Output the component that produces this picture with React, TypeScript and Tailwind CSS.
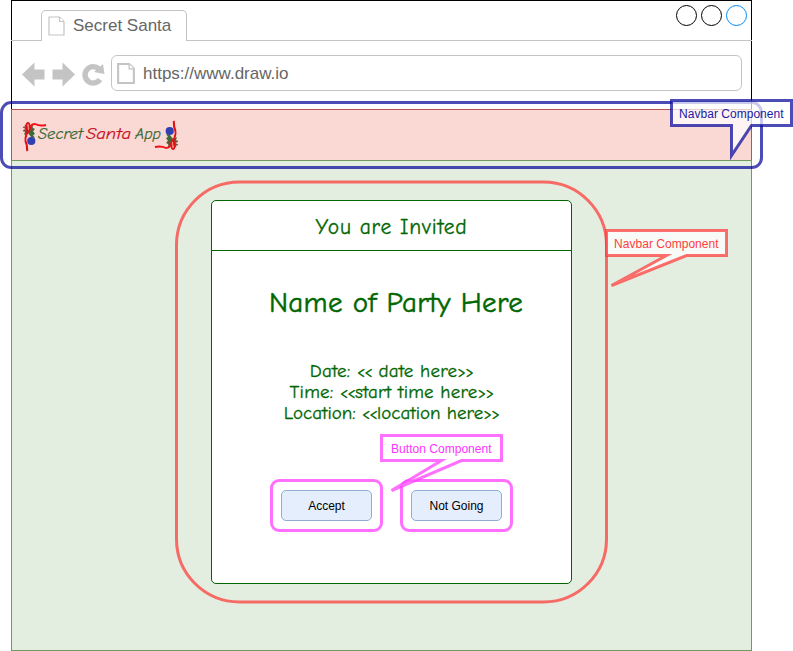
import React from "react";

function PageIcon({ className, bold = false }: { className: string; bold?: boolean }) {
  return (
    <svg className={className} viewBox="0 0 17 20" fill="white" stroke="#c4c4c4" strokeWidth={bold ? 2 : 1.2}>
      <path d="M1 1H11.5L16 5.5V19H1Z" />
      <path d="M11.5 1V5.5H16" strokeWidth="1.2" />
    </svg>
  );
}

function Sprig({ transform }: { transform?: string }) {
  return (
    <g transform={transform}>
      <path d="M6 8L9 4L10 7L12 8L10 10L12 13L10 14L12 17L8 16L5 12L1 14L2 11L0 9L3 8L1 5L5 6Z" fill="#3a6b38" />
      <path d="M0 6L4 8M0 10L5 9M2 4L5 7M8 6L10 4M8 9L11 9M2 13L5 11" stroke="#9a3a32" strokeWidth="1.2" fill="none" />
      <path d="M5 11C2.5 7 3.5 2 5 2C7 2 6.5 8 5 11C2 15 2 20 3.5 23C4.5 26 3.5 28 4.5 30" stroke="#df1114" strokeWidth="2.1" fill="none" />
      <path d="M6 11C7 5 8 3 12 3C16 5 19 5 23 4" stroke="#f01015" strokeWidth="1.9" fill="none" />
      <path d="M5 3L5.5 9M5 13L4 19" stroke="#f4b9b3" strokeWidth="0.8" />
      <circle cx="8.3" cy="20" r="4.1" fill="#3040b3" />
    </g>
  );
}

function Logo() {
  return (
    <svg
      className="ml-[10px] mt-[10px] h-8 w-[158px] font-['Comic_Sans_MS','Comic_Neue',Lato,cursive] text-[15.5px] italic"
      viewBox="22 120 158 32"
    >
      <Sprig transform="translate(23 121)" />
      <Sprig transform="translate(178 151) rotate(180)" />
      <g strokeWidth="0.2">
        <text x="38" y="138.5" fill="#376633" stroke="#376633" textLength="45" lengthAdjust="spacingAndGlyphs">Secret</text>
        <text x="86" y="138.5" fill="#c80d1c" stroke="#c80d1c" textLength="45" lengthAdjust="spacingAndGlyphs">Santa</text>
        <text x="135" y="138.5" fill="#376633" stroke="#376633" textLength="26" lengthAdjust="spacingAndGlyphs">App</text>
      </g>
    </svg>
  );
}

function BrowserChrome() {
  return (
    <header className="h-[109px] border-x border-t border-black bg-white font-['Liberation_Sans',sans-serif] text-[#666666]">
      <div className="-mx-px flex h-10 items-start border-b border-[#c4c4c4]">
        <div className="-mb-px ml-[30px] mt-[9px] flex h-[31px] w-[146px] items-center rounded-t-[5px] border border-b-0 border-[#c4c4c4] bg-white pl-[6px]">
          <PageIcon className="h-[20px] w-[17px]" />
          <span className="ml-[8px] text-[17px] leading-[20px]">Secret Santa</span>
        </div>
        <svg className="ml-auto mr-[4px] mt-[3px] h-[23px] w-[73px]" viewBox="675 4 73 23" fill="white">
          <circle cx="686.5" cy="15.5" r="10" stroke="#000" />
          <circle cx="711.5" cy="15.5" r="10" stroke="#000" />
          <circle cx="736.5" cy="15.5" r="10" stroke="#008cff" />
        </svg>
      </div>
      <div className="flex pt-[14px]">
        <svg className="ml-[10px] mt-[6px] h-[26px] w-[84px]" viewBox="22 61 84 26" fill="#c4c4c4">
          <path d="M22 74.5L34.5 62.5V69.5H44.5V79.5H34.5V86.5Z" />
          <path d="M75 74.5L62.5 62.5V69.5H52.5V79.5H62.5V86.5Z" />
          <path d="M100 79.5A8.2 8.2 0 1 1 99 69" fill="none" stroke="#c4c4c4" strokeWidth="5.4" />
          <path d="M103 64L104.5 74L94 72Z" />
        </svg>
        <div className="ml-[5px] flex h-[36px] w-[631px] items-center rounded-[6px] border border-[#c4c4c4] pl-[5px]">
          <PageIcon bold className="h-[21px] w-[18px]" />
          <span className="ml-[8px] pt-[2px] text-[17px] leading-[20px]">https://www.draw.io</span>
        </div>
      </div>
    </header>
  );
}

function CardButton({ children }: { children: React.ReactNode }) {
  return (
    <button className="h-[31px] w-[91px] rounded-[5px] border border-[#91add3] bg-[#e5eefd] pt-px font-['Liberation_Sans',sans-serif] text-[12px] text-black">
      {children}
    </button>
  );
}

function Angles({ children }: { children: string }) {
  return <span className="text-[16px] leading-none tracking-[-0.7px]">{children}</span>;
}

function InvitationCard() {
  return (
    <section className="ml-[199px] mt-[39px] h-[384px] w-[361px] rounded-[5px] border border-[#006600] bg-white text-center font-['Comic_Sans_MS','Comic_Neue',Lato,cursive] text-[#006600]">
      <div className="flex h-[50px] items-center justify-center border-b border-[#006600] [-webkit-text-stroke:0.3px_#006600]">
        <h2 className="pt-[2px] text-[21.5px] leading-6 tracking-[0.8px]">You are Invited</h2>
      </div>
      <h1 className="ml-[9px] mt-[34px] whitespace-nowrap text-[29px] leading-9 tracking-[0.3px] [-webkit-text-stroke:0.5px_#006600]">Name of Party Here</h1>
      <div className="mt-[40px] text-[19px] leading-[21px] [-webkit-text-stroke:0.3px_#006600]">
        <p className="h-[21px] tracking-[0.2px]">Date: <Angles>&lt;&lt;</Angles> date here<Angles>&gt;&gt;</Angles></p>
        <p className="h-[21px] tracking-[0.2px]">Time: <Angles>&lt;&lt;</Angles>start time here<Angles>&gt;&gt;</Angles></p>
        <p className="h-[21px]">Location: <Angles>&lt;&lt;</Angles>location here<Angles>&gt;&gt;</Angles></p>
      </div>
      <div className="ml-[69px] mt-[66px] flex gap-[39px]">
        <CardButton>Accept</CardButton>
        <CardButton>Not Going</CardButton>
      </div>
    </section>
  );
}

function Annotations() {
  return (
    <svg className="pointer-events-none absolute left-0 top-0 h-[651px] w-[793px]" viewBox="0 0 793 651" strokeWidth="3" fontFamily="Liberation Sans, Arial, sans-serif" fontSize="12" textAnchor="middle">
      <g fill="none" strokeOpacity="0.7">
        <rect x="1.5" y="102.6" width="760" height="65" rx="9.75" stroke="#000099" />
        <rect x="176.5" y="182" width="430" height="420" rx="63" stroke="#ff3333" />
        <rect x="271.5" y="480.5" width="110" height="50" rx="7.5" stroke="#ff33ff" />
        <rect x="401.5" y="480.5" width="110" height="50" rx="7.5" stroke="#ff33ff" />
      </g>
      <g fill="white" fillOpacity="0.7" strokeOpacity="0.7" strokeMiterlimit="10">
        <path d="M671.5 100.5H791.5V125.5H751.5L731.5 155.5V125.5H671.5Z" stroke="#000099" />
        <path d="M606.5 230.5H726.5V255.5H686.5L611.5 285.5L666.5 255.5H606.5Z" stroke="#ff3333" />
        <path d="M381.5 435.5H501.5V460.5H461.5L391.5 490.5L441.5 460.5H381.5Z" stroke="#ff33ff" />
      </g>
      <text x="731.3" y="118" fill="#1a1aa3" textLength="104.5">Navbar Component</text>
      <text x="666.3" y="248" fill="#ff4040" textLength="104.5">Navbar Component</text>
      <text x="441.3" y="453" fill="#ff33ff" textLength="100.5">Button Component</text>
    </svg>
  );
}

export default function App() {
  return (
    <div className="relative h-[651px] w-[793px] overflow-hidden bg-white">
      <div className="ml-[11px] w-[741px]">
        <BrowserChrome />
        <nav className="h-[51px] border-x border-t border-[#b85450] bg-[#fad9d5]">
          <Logo />
        </nav>
        <main className="flow-root h-[491px] border border-[#729a60] bg-[#e3eee0]">
          <InvitationCard />
        </main>
      </div>
      <Annotations />
    </div>
  );
}
